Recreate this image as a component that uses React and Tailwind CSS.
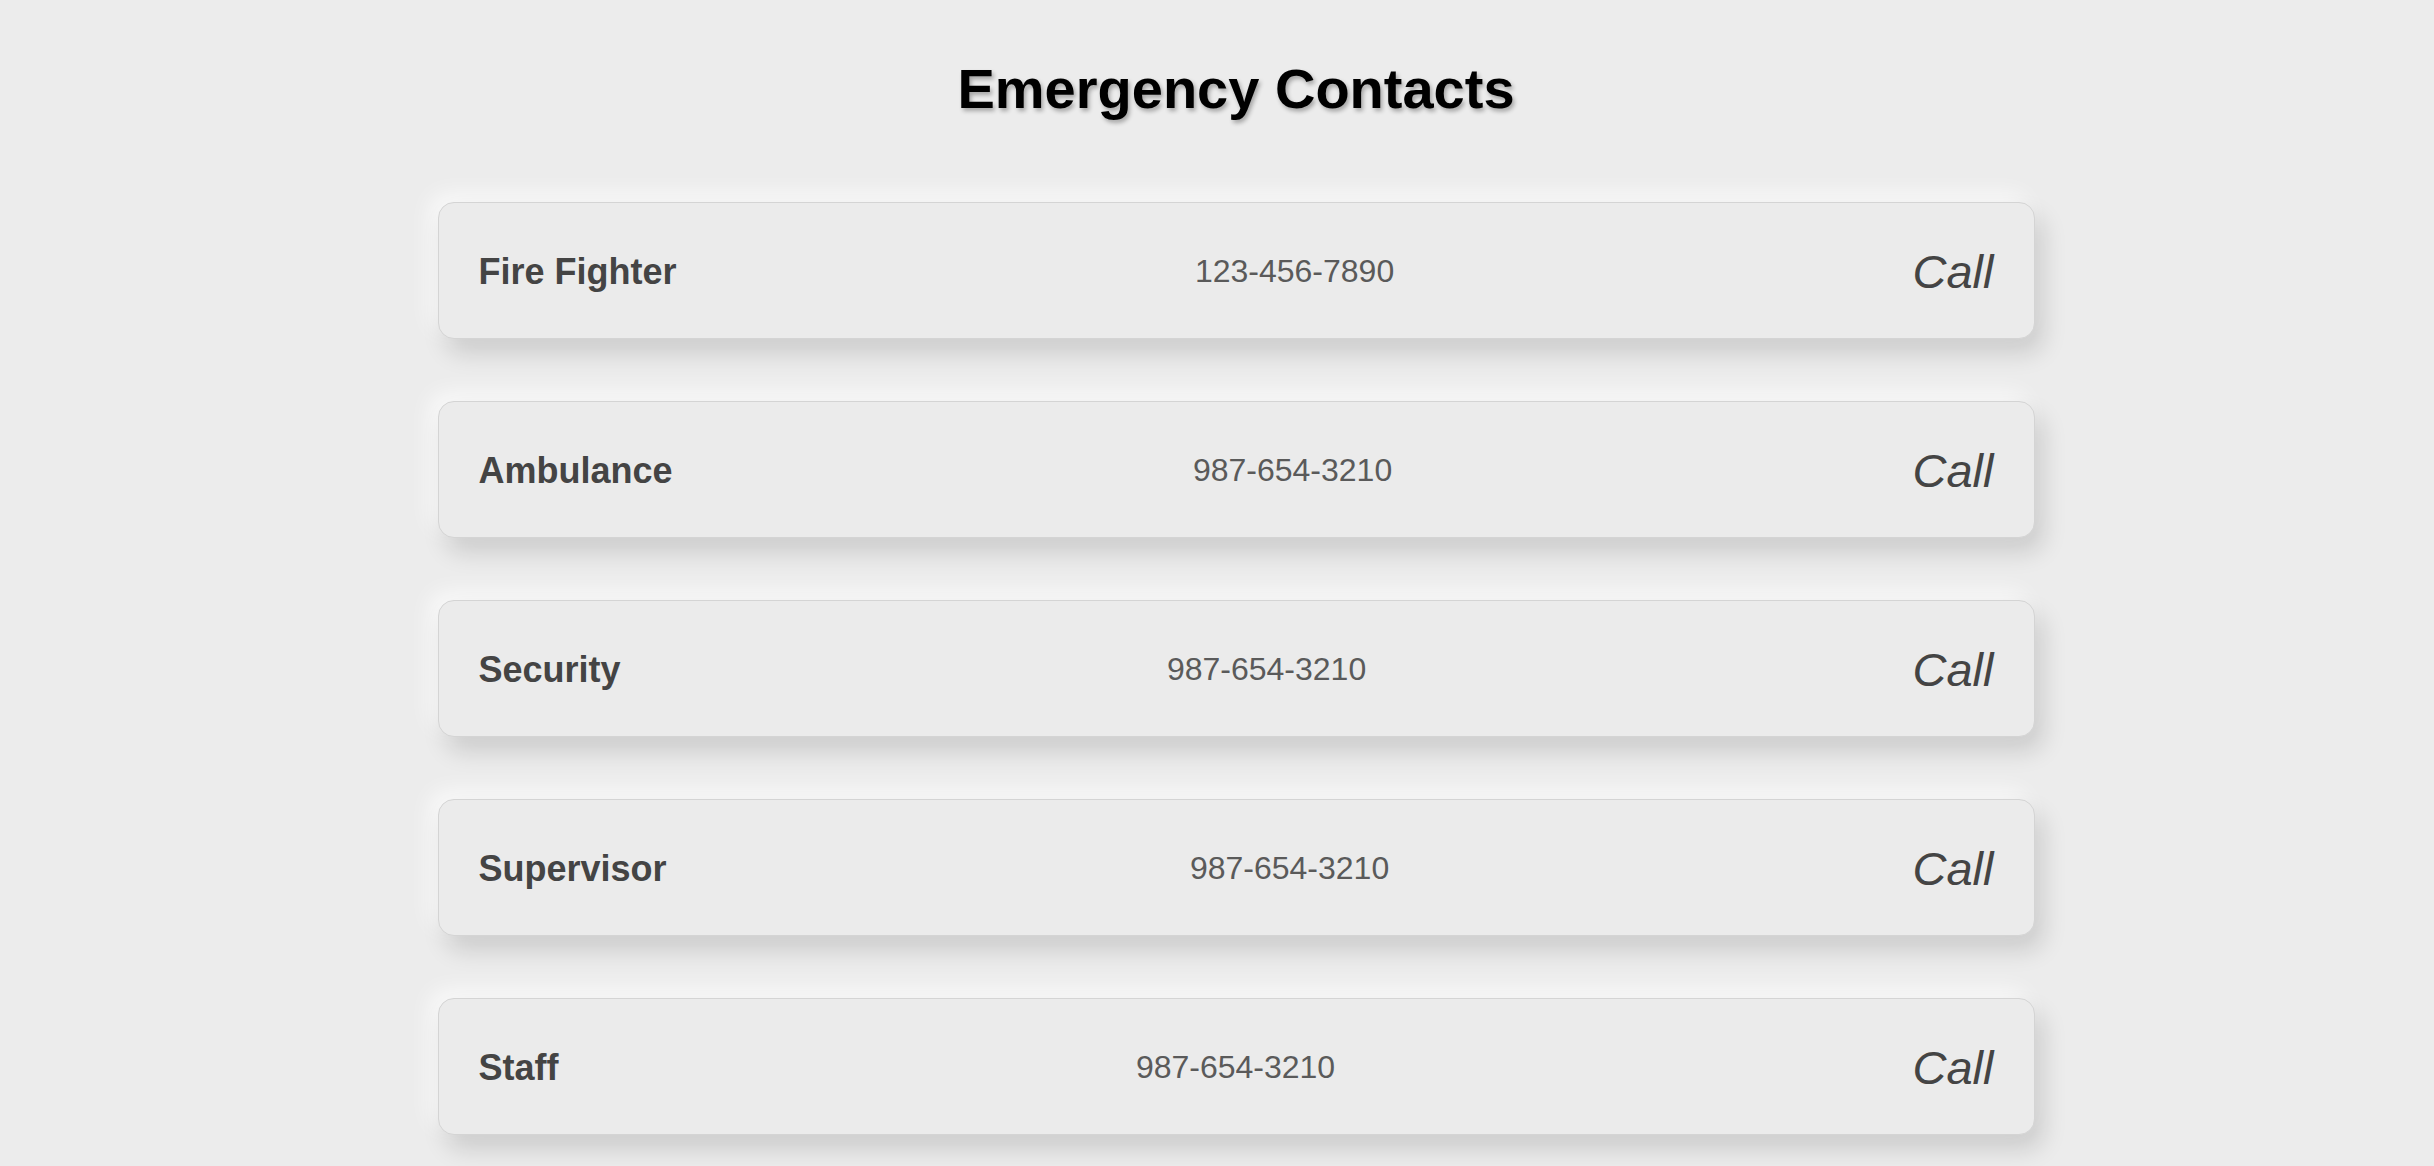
import React from 'react';

// Liste des contacts d'urgence
const contacts = [
    { name: 'Fire Fighter', phone: '123-456-7890' },
    { name: 'Ambulance', phone: '987-654-3210' },
    { name: 'Security', phone: '987-654-3210' },
    { name: 'Supervisor', phone: '987-654-3210' },
    { name: 'Staff', phone: '987-654-3210' },
];

const ContactCard = ({ name, phone }) => (
    <div className="flex items-center justify-between px-[40px] pt-[41px] pb-[39px] rounded-2xl border border-[#d4d4d4] bg-[#ebebeb] shadow-[8px_14px_24px_rgba(0,0,0,0.14),-8px_-8px_22px_rgba(255,255,255,0.75)]">
        <span className="text-[36px] font-bold text-[#444]">{name}</span>
        <span className="text-[32px] text-[#5a5a5a]">{phone}</span>
        <span className="text-[47px] italic text-[#444]">Call</span>
    </div>
);

export default function App() {
    return (
        <div className="min-h-screen bg-[#ececec] pl-[38px] leading-[normal] font-['Liberation_Sans',Arial,sans-serif]">
            <div className="mx-auto w-[1597px] pt-[56px]">
                <h1 className="text-center text-[56px] font-bold text-black [text-shadow:2px_3px_4px_rgba(0,0,0,0.3)]">
                    Emergency Contacts
                </h1>
                <div className="mt-[81px] flex flex-col gap-[62px] pb-10">
                    {contacts.map((c) => (
                        <ContactCard key={c.name} name={c.name} phone={c.phone} />
                    ))}
                </div>
            </div>
        </div>
    );
}
